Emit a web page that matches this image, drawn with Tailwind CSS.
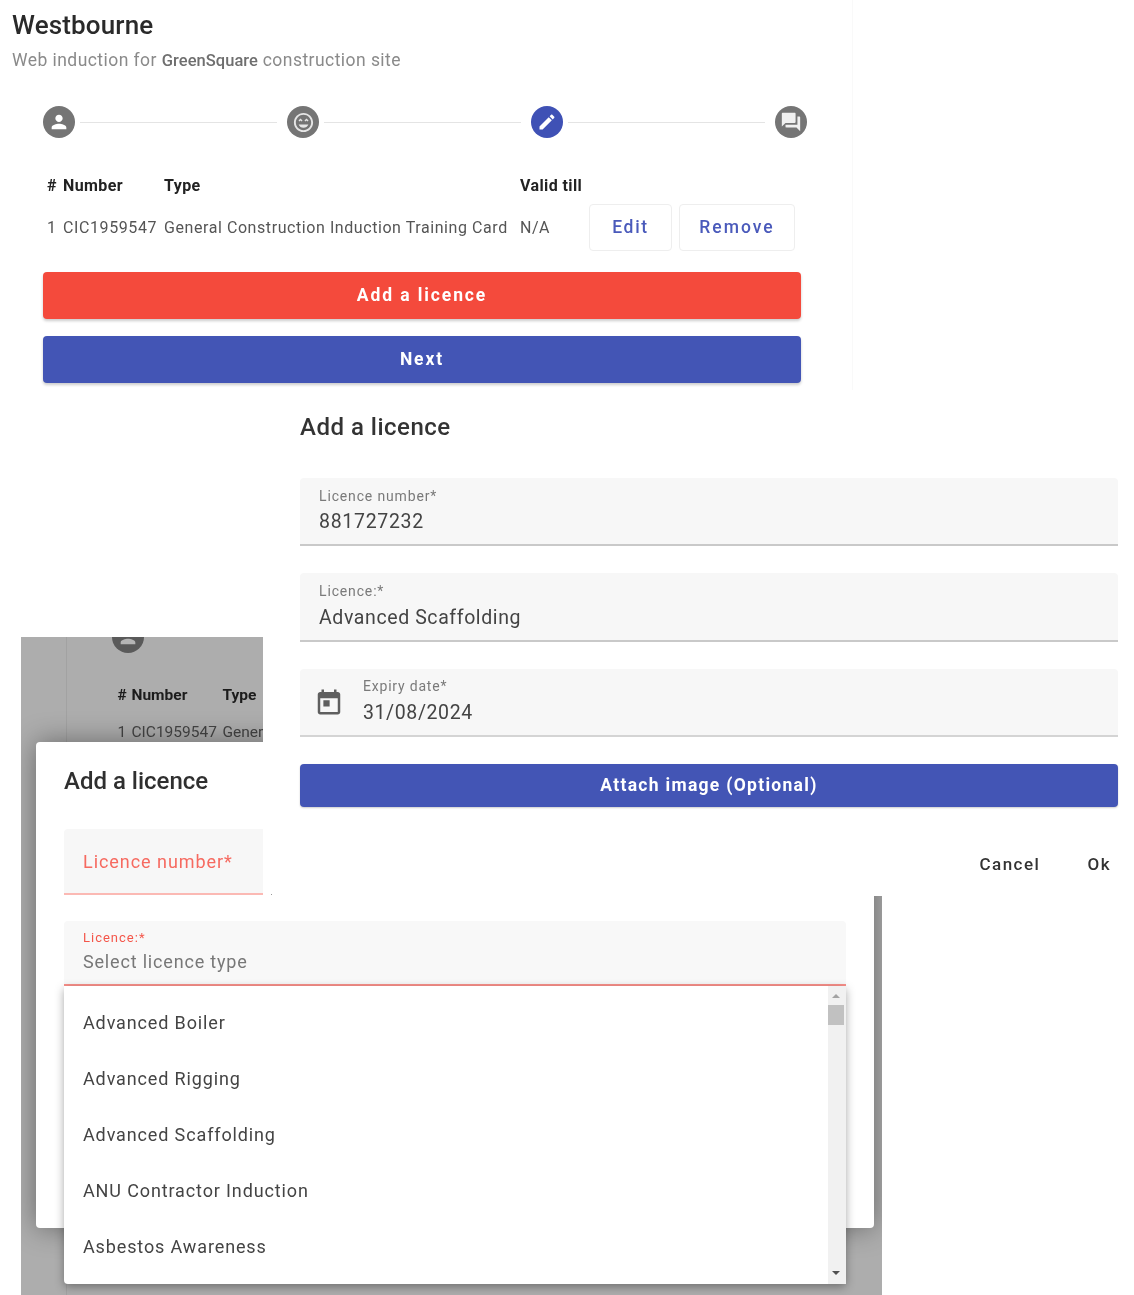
<!DOCTYPE html>
<html lang="en">
<head>
<meta charset="utf-8">
<title>Westbourne induction</title>
<script src="https://cdn.jsdelivr.net/npm/@tailwindcss/browser@4"></script>
</head>
<body class="bg-white">
<div class="relative w-[1134px] h-[1295px] overflow-hidden bg-white font-[Roboto,sans-serif] blur-[0.6px]">

  <!-- top window -->
  <section class="absolute left-0 top-0 w-[853px] h-[390px] border-r border-[#f9f9f9] pl-[12px]">
    <h1 class="pt-[9px] text-[26px] leading-[32px] font-medium text-[#2a2a2a] tracking-[0.15px]">Westbourne</h1>
    <p class="mt-[7px] text-[17.5px] leading-[24px] text-[#8a8a8a] tracking-[0.45px]">Web induction for <span class="font-medium text-[16.5px] tracking-[0.05px] text-[#6f6f6f]">GreenSquare</span> construction site</p>

    <div class="mt-[33px] ml-[31px] w-[764px] flex items-center">
      <span class="w-8 h-8 rounded-full bg-[#757575] flex items-center justify-center shrink-0">
        <svg class="w-[22px] h-[22px] fill-white" viewBox="0 0 24 24"><path d="M12 12c2.21 0 4-1.79 4-4s-1.79-4-4-4-4 1.79-4 4 1.79 4 4 4zm0 2c-2.67 0-8 1.34-8 4v2h16v-2c0-2.66-5.33-4-8-4z"/></svg>
      </span>
      <span class="flex-1 h-px bg-[#e4e4e4] ml-[5px] mr-[10px]"></span>
      <span class="w-8 h-8 rounded-full bg-[#757575] flex items-center justify-center shrink-0">
        <svg class="w-[23px] h-[23px] fill-[#e6e6e6]" viewBox="0 0 24 24"><path d="M11.99 2C6.47 2 2 6.48 2 12s4.47 10 9.99 10C17.52 22 22 17.52 22 12S17.52 2 11.99 2zM12 20c-4.42 0-8-3.58-8-8s3.58-8 8-8 8 3.58 8 8-3.58 8-8 8zm1-10.06L14.06 11l1.06-1.06L16.18 11l1.06-1.06-2.12-2.12zm-4.12 0L9.94 11 11 9.94 8.88 7.82 6.76 9.94 7.82 11zM12 17.5c2.33 0 4.31-1.46 5.11-3.5H6.89c.8 2.04 2.78 3.5 5.11 3.5z"/></svg>
      </span>
      <span class="flex-1 h-px bg-[#e4e4e4] ml-[5px] mr-[10px]"></span>
      <span class="w-8 h-8 rounded-full bg-[#3f51b5] flex items-center justify-center shrink-0">
        <svg class="w-5 h-5 fill-white" viewBox="0 0 24 24"><path d="M3 17.25V21h3.75L17.81 9.94l-3.75-3.75L3 17.25zM20.71 7.04c.39-.39.39-1.02 0-1.41l-2.34-2.34c-.39-.39-1.02-.39-1.41 0l-1.83 1.83 3.75 3.75 1.83-1.83z"/></svg>
      </span>
      <span class="flex-1 h-px bg-[#e4e4e4] ml-[5px] mr-[10px]"></span>
      <span class="w-8 h-8 rounded-full bg-[#757575] flex items-center justify-center shrink-0">
        <svg class="w-[22px] h-[22px] fill-[#f0f0f0]" viewBox="0 0 24 24"><path d="M21 6h-2v9H6v2c0 .55.45 1 1 1h11l4 4V7c0-.55-.45-1-1-1zm-4 6V3c0-.55-.45-1-1-1H3c-.55 0-1 .45-1 1v14l4-4h10c.55 0 1-.45 1-1z"/></svg>
      </span>
    </div>

    <div class="mt-[37px] ml-[35px] grid grid-cols-[16px_101px_356px_69px_auto] text-[16px] items-center">
      <span class="font-bold text-[#222] leading-[22px]">#</span>
      <span class="font-bold text-[#222] leading-[22px] tracking-[0.4px]">Number</span>
      <span class="font-bold text-[#222] leading-[22px] tracking-[0.4px]">Type</span>
      <span class="font-bold text-[#222] leading-[22px] tracking-[0.4px] col-span-2">Valid till</span>
      <span class="mt-[7px] text-[#555]">1</span>
      <span class="mt-[7px] text-[#555] tracking-[0.6px]">CIC1959547</span>
      <span class="mt-[7px] text-[#555] tracking-[0.57px] whitespace-nowrap">General Construction Induction Training Card</span>
      <span class="mt-[7px] text-[#555] tracking-[0.5px]">N/A</span>
      <span class="mt-[7px] flex gap-[7px]">
        <button class="w-[83px] h-[47px] rounded border border-[#eeeeee] text-[#4a5abb] text-[17.5px] font-medium tracking-[1.7px]">Edit</button>
        <button class="w-[116px] h-[47px] rounded border border-[#eeeeee] text-[#4a5abb] text-[17.5px] font-medium tracking-[2px]">Remove</button>
      </span>
    </div>

    <button class="mt-[21px] ml-[31px] block w-[758px] h-[47px] rounded bg-[#f44a3c] text-white text-[17.5px] font-bold tracking-[1.9px] shadow-[0_2px_3px_rgba(0,0,0,0.2)]">Add a licence</button>
    <button class="mt-[17px] ml-[31px] block w-[758px] h-[47px] rounded bg-[#4355b5] text-white text-[17.5px] font-bold tracking-[1.9px] shadow-[0_2px_3px_rgba(0,0,0,0.2)]">Next</button>
  </section>

  <!-- dimmed window -->
  <section class="absolute left-[21px] top-[637px] w-[861px] h-[658px] overflow-hidden bg-[#adadad]">
    <div class="absolute left-[45px] top-0 bottom-0 w-px bg-[#a2a2a2]"></div>
    <span class="absolute left-[91px] top-[-16px] w-8 h-8 rounded-full bg-[#5a5a5a] overflow-hidden flex items-center justify-center">
      <svg class="w-[22px] h-[22px] fill-[#b5b5b5]" viewBox="0 0 24 24"><path d="M12 12c2.21 0 4-1.79 4-4s-1.79-4-4-4-4 1.79-4 4 1.79 4 4 4zm0 2c-2.67 0-8 1.34-8 4v2h16v-2c0-2.66-5.33-4-8-4z"/></svg>
    </span>
    <div class="absolute left-[96.5px] top-[47px] grid grid-cols-[14px_91px_auto] text-[15.5px] whitespace-nowrap">
      <span class="font-bold text-[#1c1c1c] leading-[22px]">#</span>
      <span class="font-bold text-[#1c1c1c] leading-[22px]">Number</span>
      <span class="font-bold text-[#1c1c1c] leading-[22px]">Type</span>
      <span class="mt-[15px] text-[#444] leading-[22px]">1</span>
      <span class="mt-[15px] text-[#444] leading-[22px]">CIC1959547</span>
      <span class="mt-[15px] text-[#444] leading-[22px]">General</span>
    </div>

    <!-- modal -->
    <div class="absolute left-[15px] top-[105px] w-[838px] h-[486px] rounded bg-white shadow-[0_0_28px_rgba(0,0,0,0.4)] pl-[28px] pr-[28px]">
      <h2 class="pt-[23px] text-[24px] leading-[32px] font-medium text-[#2f2f2f]">Add a licence</h2>
      <div class="mt-[32px] h-[66px] rounded-t bg-[#f7f7f7] border-b-2 border-[#fbb9b4] px-[19px] flex items-center">
        <span class="text-[18px] text-[#f66a60] tracking-[0.95px]">Licence number*</span>
      </div>
      <div class="mt-[26px] h-[65px] rounded-t bg-[#f8f8f8] border-b-2 border-[#f9908a] px-[19px] pt-[8px]">
        <p class="text-[13px] leading-[18px] text-[#f4564a] tracking-[1px]">Licence:*</p>
        <p class="mt-[3px] text-[18px] leading-[24px] text-[#777] tracking-[0.82px]">Select licence type</p>
      </div>
    </div>

    <!-- dropdown -->
    <div class="absolute left-[43px] top-[349px] w-[782px] h-[298px] bg-white shadow-[0_3px_10px_rgba(0,0,0,0.35)] rounded-b-sm flex">
      <ul class="flex-1 pt-[8px] text-[18px] text-[#444] tracking-[0.87px]">
        <li class="h-[56px] px-[19px] flex items-center">Advanced Boiler</li>
        <li class="h-[56px] px-[19px] flex items-center">Advanced Rigging</li>
        <li class="h-[56px] px-[19px] flex items-center">Advanced Scaffolding</li>
        <li class="h-[56px] px-[19px] flex items-center">ANU Contractor Induction</li>
        <li class="h-[56px] px-[19px] flex items-center">Asbestos Awareness</li>
      </ul>
      <div class="w-[18px] bg-[#f1f1f1] pr-[2px] flex flex-col items-center justify-between pt-[8px] pb-[9px]">
        <div class="flex flex-col items-center">
          <span class="w-0 h-0 border-x-[4px] border-x-transparent border-b-[4px] border-b-[#a3a3a3]"></span>
          <span class="mt-[7px] w-[16px] h-[20px] bg-[#c1c1c1]"></span>
        </div>
        <span class="w-0 h-0 border-x-[4px] border-x-transparent border-t-[4px] border-t-[#505050]"></span>
      </div>
    </div>
  </section>

  <!-- right window -->
  <section class="absolute left-[263px] top-[396px] w-[871px] h-[500px] bg-white pl-[37px] pr-[16px]">
    <h2 class="pt-[15px] text-[24px] leading-[32px] font-medium text-[#333] tracking-[0.5px]">Add a licence</h2>
    <div class="mt-[35px] h-[68px] rounded-t bg-[#f7f7f7] border-b-2 border-[#c9c9c9] px-[19px] pt-[8px]">
      <p class="text-[14px] leading-[20px] text-[#7a7a7a] tracking-[0.85px]">Licence number*</p>
      <p class="mt-[2px] text-[19.5px] leading-[28px] text-[#444] tracking-[0.7px]">881727232</p>
    </div>
    <div class="mt-[27px] h-[69px] rounded-t bg-[#f7f7f7] border-b-2 border-[#c9c9c9] px-[19px] pt-[8px]">
      <p class="text-[14px] leading-[20px] text-[#7a7a7a] tracking-[0.85px]">Licence:*</p>
      <p class="mt-[3px] text-[19.5px] leading-[28px] text-[#444] tracking-[0.6px]">Advanced Scaffolding</p>
    </div>
    <div class="mt-[27px] h-[68px] rounded-t bg-[#f7f7f7] border-b-2 border-[#d4d4d4] flex items-start">
      <svg class="mt-[18px] ml-[14px] w-[30px] h-[30px] fill-[#5f5f5f] shrink-0" viewBox="0 0 24 24"><path d="M19 4h-1V2h-2v2H8V2H6v2H5c-1.1 0-2 .9-2 2v14c0 1.100.9 2 2 2h14c1.100 0 2-.9 2-2V6c0-1.100-.9-2-2-2zm0 16H5V9h14v11zM7.500 10.500h5v5h-5z"/></svg>
      <div class="ml-[19px] pt-[7px]">
        <p class="text-[14px] leading-[20px] text-[#7a7a7a] tracking-[0.8px]">Expiry date*</p>
        <p class="mt-[3px] text-[19.5px] leading-[28px] text-[#444] tracking-[0.6px]">31/08/2024</p>
      </div>
    </div>
    <button class="mt-[27px] block w-full h-[43px] rounded bg-[#4355b5] text-white text-[17.5px] font-bold tracking-[1.3px] shadow-[0_1px_2px_rgba(0,0,0,0.2)]">Attach image (Optional)</button>
    <div class="mt-[43px] flex justify-end gap-[47px] pr-[7px] text-[17px] leading-[28px] font-medium text-[#333] tracking-[1.5px]">
      <button>Cancel</button>
      <button>Ok</button>
    </div>
    <span class="absolute left-[8px] top-[498px] w-px h-px bg-[#999]"></span>
  </section>
</div>
</body>
</html>
